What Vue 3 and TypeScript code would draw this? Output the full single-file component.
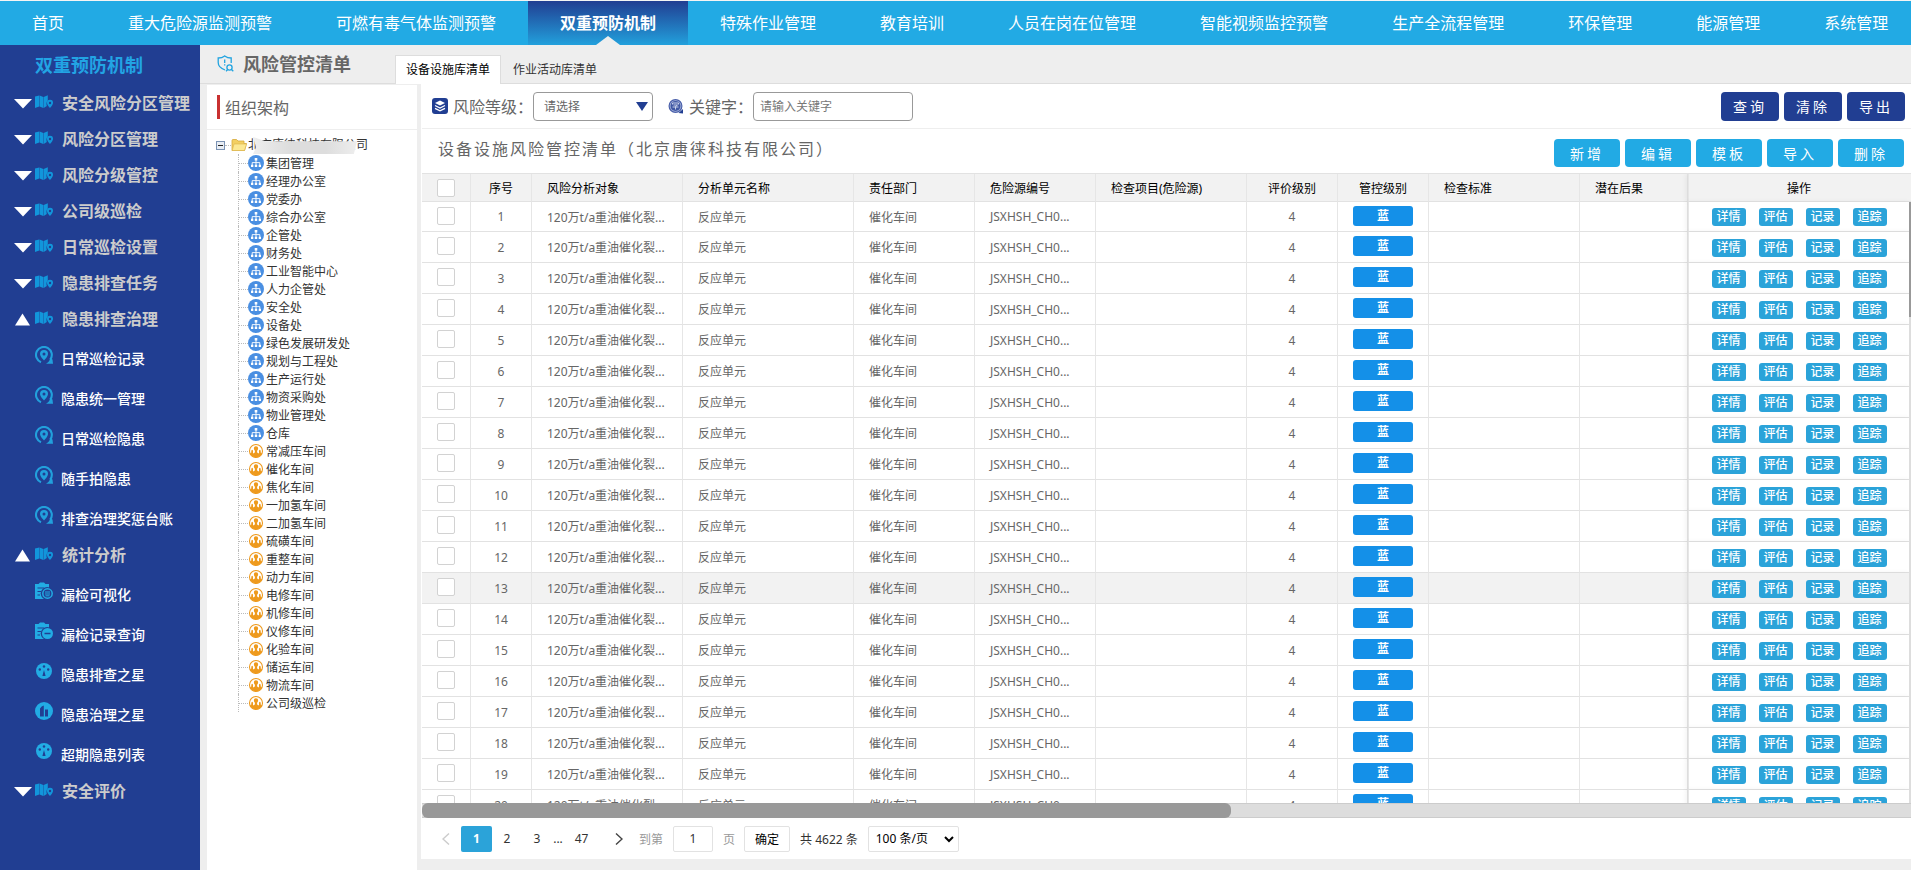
<script setup lang="ts">
import { ref } from 'vue'

interface SubItem { label: string; icon: 'pin' | 'doc' | 'docMinus' | 'wheel' | 'chart' }
interface MenuItem { label: string; children?: SubItem[] }

const navItems: string[] = [
  '首页', '重大危险源监测预警', '可燃有毒气体监测预警', '双重预防机制', '特殊作业管理', '教育培训',
  '人员在岗在位管理', '智能视频监控预警', '生产全流程管理', '环保管理', '能源管理', '系统管理',
]
const activeNav = ref('双重预防机制')

const menu: MenuItem[] = [
  { label: '安全风险分区管理' },
  { label: '风险分区管理' },
  { label: '风险分级管控' },
  { label: '公司级巡检' },
  { label: '日常巡检设置' },
  { label: '隐患排查任务' },
  {
    label: '隐患排查治理',
    children: [
      { label: '日常巡检记录', icon: 'pin' },
      { label: '隐患统一管理', icon: 'pin' },
      { label: '日常巡检隐患', icon: 'pin' },
      { label: '随手拍隐患', icon: 'pin' },
      { label: '排查治理奖惩台账', icon: 'pin' },
    ],
  },
  {
    label: '统计分析',
    children: [
      { label: '漏检可视化', icon: 'doc' },
      { label: '漏检记录查询', icon: 'docMinus' },
      { label: '隐患排查之星', icon: 'wheel' },
      { label: '隐患治理之星', icon: 'chart' },
      { label: '超期隐患列表', icon: 'wheel' },
    ],
  },
  { label: '安全评价' },
]

const departments: string[] = [
  '集团管理', '经理办公室', '党委办', '综合办公室', '企管处', '财务处', '工业智能中心', '人力企管处',
  '安全处', '设备处', '绿色发展研发处', '规划与工程处', '生产运行处', '物资采购处', '物业管理处', '仓库',
]
const workshops: string[] = [
  '常减压车间', '催化车间', '焦化车间', '一加氢车间', '二加氢车间', '硫磺车间', '重整车间', '动力车间',
  '电修车间', '机修车间', '仪修车间', '化验车间', '储运车间', '物流车间', '公司级巡检',
]

const toolbar: string[] = ['新增', '编辑', '模板', '导入', '删除']
const searchButtons: string[] = ['查询', '清除', '导出']
const rowActions: string[] = ['详情', '评估', '记录', '追踪']
const rows: number[] = Array.from({ length: 20 }, (_, i) => i + 1)
const hovered = 13
const keyword = ref('')
const pageInput = ref('1')
</script>

<template>
  <div class="app">
    <nav class="topnav">
      <a v-for="n in navItems" :key="n" href="#" class="nav-item" :class="{ active: n === activeNav }">
        {{ n }}
        <svg v-if="n === activeNav" class="nav-arrow" width="24" height="9" viewBox="0 0 24 9"><path d="M0 9L12 0L24 9Z" fill="#eee" /></svg>
      </a>
    </nav>

    <div class="body">
      <aside class="sidebar">
        <h2 class="side-title">双重预防机制</h2>
        <template v-for="m in menu" :key="m.label">
          <a href="#" class="menu-item">
            <svg class="caret" width="18" height="14" viewBox="0 0 18 14">
              <path v-if="m.children" d="M1 13.5L8.5 1.5L16 13.5Z" fill="#fff" />
              <path v-else d="M0 3L18 3L9 12.500Z" fill="#fff" />
            </svg>
            <svg class="menu-icon" width="18" height="14" viewBox="0 0 18 14">
              <path d="M0 1.500L4.200 .5V11.500L0 13ZM4.600 .5L8.300 2V13L4.600 11.500ZM8.700 2L12.800 .3V5.500Q10.800 7.500 11.800 11L8.700 13Z" fill="#1296db" />
              <path d="M15 4.800a3 3 0 0 1 3 3.200c0 1.900-3 5-3 5s-3-3.100-3-5a3 3 0 0 1 3-3.200Z" fill="#1296db" />
              <circle cx="15" cy="8" r="1.200" fill="#213e92" />
            </svg>
            <span>{{ m.label }}</span>
          </a>
          <a v-for="s in m.children" :key="s.label" href="#" class="sub-item">
            <svg class="sub-icon" width="18" height="18" viewBox="0 0 18 18">
              <g v-if="s.icon === 'pin'">
                <path d="M6 16.200A7.900 7.900 0 1 1 15.300 13.500" fill="none" stroke="#22a0dc" stroke-width="2.100" />
                <path d="M18 17.800H11Q15 15.500 15 12L17.500 13.500Z" fill="#22a0dc" />
                <path d="M9 4a4 4 0 0 1 4 4c0 2.500-4 6.500-4 6.500s-4-4-4-6.500a4 4 0 0 1 4-4Z" fill="#22a0dc" />
                <circle cx="9" cy="8" r="1.500" fill="#213e92" />
              </g>
              <g v-else-if="s.icon === 'doc' || s.icon === 'docMinus'">
                <path d="M0 2H3.500L5 .5H9L10.500 2H14V17H0Z" fill="#22ace4" />
                <path d="M2.500 6H9M2.500 9.500H6M2.500 13H5" stroke="#213e92" stroke-width="1" />
                <circle cx="12.200" cy="11.500" r="6.500" fill="#213e92" />
                <template v-if="s.icon === 'doc'">
                  <circle cx="12.500" cy="11.500" r="4.700" fill="none" stroke="#22ace4" stroke-width="1.500" />
                  <path d="M10 10H15M10 12H15M10.500 13.800H14.500" stroke="#22ace4" stroke-width="1" />
                </template>
                <template v-else>
                  <circle cx="12.500" cy="11.500" r="5.500" fill="#22ace4" />
                  <path d="M9.500 11.500H15.500" stroke="#213e92" stroke-width="1.500" />
                </template>
              </g>
              <g v-else-if="s.icon === 'wheel'">
                <circle cx="9" cy="9" r="8" fill="#22ace4" />
                <circle cx="9" cy="4.500" r="1.200" fill="#213e92" />
                <circle cx="4.800" cy="7.500" r="1.200" fill="#213e92" />
                <circle cx="13.200" cy="7.500" r="1.200" fill="#213e92" />
                <path d="M9 8L10.600 14H7.400Z" fill="#213e92" />
              </g>
              <g v-else>
                <circle cx="9" cy="9" r="9" fill="#22ace4" />
                <path d="M5 6.500Q6.500 4 8.800 3.500V14.500H5ZM10 7.500H13V14.500H10Z" fill="#213e92" />
              </g>
            </svg>
            <span>{{ s.label }}</span>
          </a>
        </template>
      </aside>

      <div class="content">
        <header class="page-head">
          <svg class="shield" width="17" height="17" viewBox="0 0 17 17" fill="none" stroke="#22a4e0" stroke-width="1.300">
            <path d="M8 15Q1.200 12.500 1.200 7.500V3Q5 3 7.700 .9Q10.500 3 14.200 3V8M7.700 4.500V8M7.700 9.200V10.500" />
            <circle cx="12.500" cy="12.500" r="2.600" /><path d="M14.500 14.500L16.300 16.300M10.700 14.500L9 16.300" />
          </svg>
          <h1>风险管控清单</h1>
          <a href="#" class="tab active">设备设施库清单</a>
          <a href="#" class="tab">作业活动库清单</a>
        </header>

        <div class="panels">
          <section class="tree-panel">
            <h3><i class="bar"></i>组织架构</h3>
            <ul class="tree">
              <li class="root">
                <svg class="toggle" width="9" height="9" viewBox="0 0 9 9"><rect x=".5" y=".5" width="8" height="8" fill="#e8edf4" stroke="#7b93b3" /><path d="M2 4.500H7" stroke="#222" /></svg>
                <i class="dash"></i>
                <svg class="folder" width="16" height="16" viewBox="0 0 16 16">
                  <path d="M1 13V3.500Q1 2.500 2 2.500H5.500L7 4H13V6.500H15.500L13.500 13.500H1Z" fill="#f3cf62" stroke="#d6a93a" stroke-width=".8" />
                  <path d="M3 7H15.500L13.500 13.500H1.200Z" fill="#fce893" stroke="#dcb14a" stroke-width=".6" />
                </svg>
                <span class="root-name">北京唐徕科技有限公司<i class="mask"></i></span>
              </li>
              <li v-for="d in departments" :key="d" class="leaf">
                <i class="dash"></i>
                <svg width="16" height="16" viewBox="0 0 16 16">
                  <circle cx="8" cy="8" r="8" fill="#4a8fe2" />
                  <path d="M6.700 3H9.300V5.500H6.700ZM3 9.700H5.300V12H3ZM6.800 9.700H9.200V12H6.800ZM10.700 9.700H13V12H10.700Z" fill="#fff" />
                  <path d="M8 5V10M4.200 10V7.600H11.800V10" fill="none" stroke="#fff" stroke-width=".9" />
                </svg>
                <span>{{ d }}</span>
              </li>
              <li v-for="w in workshops" :key="w" class="leaf">
                <i class="dash"></i>
                <svg width="16" height="16" viewBox="0 0 16 16">
                  <circle cx="8" cy="8" r="6.500" fill="#fff" stroke="#ee9a1d" stroke-width="1.100" />
                  <path d="M8 3.200a2.100 2.100 0 0 1 2.100 2.300Q10.100 7 9.100 7.800V9.500Q11 10 11.300 11V13.500Q8 15.500 4.700 13.500V11Q5 10 6.900 9.500V7.800Q5.900 7 5.900 5.500A2.100 2.100 0 0 1 8 3.200Z" fill="#ee9a1d" />
                  <path d="M2 10.500L3.300 9.500Q3 7 4.200 6.700Q5.300 7 5 9.200V13.500Q3 12.500 2 10.500ZM14 10.500L12.700 9.500Q13 7 11.800 6.700Q10.700 7 11 9.200V13.500Q13 12.500 14 10.500Z" fill="#ee9a1d" />
                </svg>
                <span>{{ w }}</span>
              </li>
            </ul>
          </section>

          <main class="main-panel">
            <form class="search" @submit.prevent>
              <svg width="16" height="16" viewBox="0 0 16 16">
                <rect width="16" height="16" rx="3" fill="#213e92" />
                <path d="M8 2.500L13 5L8 7.500L3 5Z" fill="#fff" />
                <path d="M3 7.500L8 10L13 7.500M3 10.300L8 12.800L13 10.300" fill="none" stroke="#fff" stroke-width="1.300" />
              </svg>
              <label for="level">风险等级：</label>
              <span class="select-wrap">
                <select id="level"><option>请选择</option></select>
                <svg class="select-arrow" width="12" height="9" viewBox="0 0 12 9"><path d="M0 0H12L6 9Z" fill="#213e92" /></svg>
              </span>
              <svg class="key-icon" width="16" height="16" viewBox="0 0 16 16">
                <circle cx="7.500" cy="8" r="6.400" fill="#aab6dc" stroke="#4a60aa" stroke-width="1.200" />
                <circle cx="7.500" cy="8" r="5" fill="#4058a4" />
                <path d="M4.500 6.500V5H10.500V6.500M5.500 7H9.500L7.500 8.500V11.500M4.500 9H10.500" fill="none" stroke="#d5dcf0" stroke-width=".9" />
                <path d="M10.500 15L15 11V15.500Z" fill="#213e92" />
              </svg>
              <label for="kw">关键字：</label>
              <input id="kw" v-model="keyword" type="text" placeholder="请输入关键字" />
              <span class="spacer"></span>
              <button v-for="b in searchButtons" :key="b" type="button" class="btn dark">{{ b }}</button>
            </form>

            <div class="list-head">
              <h2>设备设施风险管控清单（北京唐徕科技有限公司）</h2>
              <span class="spacer"></span>
              <button v-for="b in toolbar" :key="b" type="button" class="btn light">{{ b }}</button>
            </div>

            <div class="grid">
              <table>
                <colgroup>
                  <col class="w49" /><col class="w61" /><col class="w151" /><col class="w171" /><col class="w121" /><col class="w121" />
                  <col class="w151" /><col class="w91" /><col class="w91" /><col class="w151" /><col /><col class="w223" />
                </colgroup>
                <thead>
                  <tr>
                    <th class="c"><input type="checkbox" aria-label="全选" /></th>
                    <th class="c">序号</th><th>风险分析对象</th><th>分析单元名称</th><th>责任部门</th><th>危险源编号</th>
                    <th>检查项目(危险源)</th><th class="c">评价级别</th><th class="c">管控级别</th><th>检查标准</th><th>潜在后果</th>
                    <th class="c fixed">操作</th>
                  </tr>
                </thead>
                <tbody>
                  <tr v-for="r in rows" :key="r" :class="{ hover: r === hovered }">
                    <td class="c raised"><input type="checkbox" :aria-label="`选择第${r}行`" /></td>
                    <td class="c">{{ r }}</td>
                    <td>120万t/a重油催化裂...</td>
                    <td>反应单元</td>
                    <td>催化车间</td>
                    <td>JSXHSH_CH0...</td>
                    <td></td>
                    <td class="c">4</td>
                    <td class="c raised"><span class="level">蓝</span></td>
                    <td></td>
                    <td></td>
                    <td class="fixed">
                      <div class="actions"><button v-for="a in rowActions" :key="a" type="button">{{ a }}</button></div>
                    </td>
                  </tr>
                </tbody>
              </table>
              <div class="vtrack"><div class="vthumb"></div></div>
            </div>
            <div class="htrack"><div class="hthumb"></div></div>

            <div class="pager">
              <button type="button" class="pg" aria-label="上一页"><svg width="8" height="12" viewBox="0 0 8 12"><path d="M7 .5L1 6L7 11.500" fill="none" stroke="#ccc" stroke-width="1.400" /></svg></button>
              <button type="button" class="pg current">1</button>
              <button type="button" class="pg">2</button>
              <button type="button" class="pg">3</button>
              <span class="dots">...</span>
              <button type="button" class="pg last">47</button>
              <button type="button" class="pg next" aria-label="下一页"><svg width="8" height="12" viewBox="0 0 8 12"><path d="M1 .5L7 6L1 11.500" fill="none" stroke="#444" stroke-width="1.400" /></svg></button>
              <label for="pageno">到第</label>
              <input id="pageno" v-model="pageInput" type="text" />
              <span class="gray">页</span>
              <button type="button" class="ok">确定</button>
              <span class="total">共 4622 条</span>
              <span class="size-wrap">
                <select aria-label="每页条数"><option>100 条/页</option></select>
                <svg class="size-arrow" width="10" height="7" viewBox="0 0 10 7"><path d="M1 1L5 5L9 1" fill="none" stroke="#000" stroke-width="2" /></svg>
              </span>
            </div>
          </main>
        </div>
      </div>
    </div>
  </div>
</template>

<style>
body { background: #eee; overflow: hidden; }
</style>

<style scoped>
.app, .app * { box-sizing: border-box; }
.app { display: flex; flex-direction: column; height: 100vh; overflow: hidden; font-family: "Noto Sans", "Noto Sans CJK SC", sans-serif; font-size: 12px; color: #333; }
button, input, select { font-family: inherit; font-size: 12px; margin: 0; padding: 0; }
a { text-decoration: none; color: inherit; }
h1, h2, h3, ul { margin: 0; padding: 0; list-style: none; }
svg { display: block; flex: none; }
i { display: block; flex: none; }
.spacer { flex: 1; }

.topnav { display: flex; flex: none; height: 45px; border-top: 1px solid #f4f4f4; background: #22aae4; overflow: hidden; }
.nav-item { position: relative; flex: none; padding: 0 32px; line-height: 44px; font-size: 16px; color: #fff; white-space: nowrap; }
.nav-item.active { font-weight: bold; background: linear-gradient(#213e92, #22a0dc); }
.nav-arrow { position: absolute; left: 50%; bottom: 0; margin-left: -12px; }

.body { display: flex; flex: 1; min-height: 0; }
.sidebar { flex: none; width: 200px; background: #213e92; overflow: hidden; }
.side-title { padding-left: 35px; height: 40px; line-height: 40px; font-size: 18px; color: #22a4e4; }
.menu-item { display: flex; align-items: center; height: 36px; padding-left: 14px; font-size: 16px; font-weight: bold; color: #ccc; white-space: nowrap; }
.menu-item span { padding-bottom: 2px; }
.caret { margin-right: 3px; }
.menu-icon { margin-right: 9px; margin-bottom: 2px; }
.sub-item { display: flex; align-items: center; height: 40px; padding-left: 35px; font-size: 14px; font-weight: 500; color: #fff; white-space: nowrap; }
.sub-icon { margin-right: 8px; margin-bottom: 4px; }
.sub-item span { padding-top: 2px; }

.content { display: flex; flex-direction: column; flex: 1; min-width: 0; }
.page-head { display: flex; align-items: flex-end; flex: none; height: 39px; padding-left: 17px; border-bottom: 1px solid #ddd; }
.shield { margin-bottom: 11px; }
.page-head h1 { margin: 0 44px 0 9px; line-height: 38px; font-size: 18px; color: #666; }
.tab { height: 28px; padding: 0 11px; line-height: 28px; border: 1px solid transparent; border-bottom: 0; white-space: nowrap; }
.tab.active { height: 29px; margin-bottom: -1px; background: #fff; border-color: #ddd; color: #000; padding: 0 10px; }
.panels { display: flex; flex: 1; min-height: 0; gap: 4px; padding-left: 7px; }

.tree-panel { flex: none; width: 210px; background: #fff; overflow: hidden; border-top: 1px solid #eee; }
.tree-panel h3 { display: flex; align-items: center; height: 45px; padding-left: 10px; border-bottom: 1px solid #eee; font-size: 16px; font-weight: normal; color: #666; }
.bar { width: 3px; height: 24px; margin-right: 5px; background: #c93131; }
.tree { padding: 6px 0 0 9px; white-space: nowrap; }
.tree li { display: flex; align-items: center; height: 18px; }
.dash { width: 8px; height: 0; border-top: 1px dotted #bbb; }
.root .dash { width: 6px; }
.folder { margin-right: 1px; }
.root-name { position: relative; line-height: 18px; }
.mask { position: absolute; left: 5px; top: 1px; width: 104px; height: 17px; background: linear-gradient(90deg, #eee, #ddd 35%, #ddd 70%, #eee); clip-path: polygon(0 0, 12% 25%, 100% 25%, 97% 100%, 0 100%, 3% 60%); }
.leaf { position: relative; margin-left: 22px; border-left: 1px dotted #bbb; color: #333; }
.leaf .dash { width: 9px; }
.leaf span { margin-left: 2px; }

.main-panel { display: flex; flex-direction: column; flex: 1; min-width: 0; margin-bottom: 11px; padding-left: 1px; background: #fff; }
.search { display: flex; align-items: center; flex: none; height: 45px; padding: 0 6px 0 10px; border-bottom: 1px solid #eee; }
.search label { margin-left: 5px; font-size: 16px; color: #666; white-space: nowrap; }
.select-wrap, .size-wrap { position: relative; flex: none; }
.select-wrap select { display: block; width: 120px; height: 29px; padding-left: 10px; border: 1px solid #999; border-radius: 4px; background: #fff; color: #666; appearance: none; }
.select-arrow { position: absolute; right: 5px; top: 10px; }
.key-icon { margin-left: 15px; }
#kw { width: 160px; height: 29px; padding: 0 6px; border: 1px solid #999; border-radius: 4px; background: #fff; color: #333; }
#kw::placeholder { color: #777; opacity: 1; }
.btn { flex: none; border: 0; border-radius: 4px; font-size: 14px; letter-spacing: 3px; color: #fff; }
.dark { width: 58px; height: 29px; margin-left: 5px; background: #213e92; }
.light { width: 66px; height: 28px; margin-left: 5px; background: #22aae4; }
.list-head { display: flex; align-items: center; flex: none; height: 44px; padding: 4px 7px 0 16px; }
.list-head h2 { margin-bottom: 10px; font-size: 16px; font-weight: normal; letter-spacing: 2px; color: #666; white-space: nowrap; }

.grid { position: relative; flex: 1; min-height: 0; overflow: hidden; border-top: 1px solid #e2e2e2; }
table { width: 100%; table-layout: fixed; border-collapse: separate; border-spacing: 0; }
.w49 { width: 49px; } .w61 { width: 61px; } .w91 { width: 91px; } .w121 { width: 121px; }
.w151 { width: 151px; } .w171 { width: 171px; } .w223 { width: 223px; }
th, td { padding: 0 0 0 15px; border-right: 1px solid #e6e6e6; border-bottom: 1px solid #e2e2e2; text-align: left; white-space: nowrap; overflow: hidden; }
th { height: 28px; background: #f2f2f2; font-weight: normal; color: #000; }
td { height: 31px; color: #666; background: #fff; }
tbody tr:first-child td { height: 30px; }
.hover td { background: #f2f2f2; }
.c { padding: 0; text-align: center; }
td.raised { padding-bottom: 2px; }
.fixed { padding: 0 2px 0 0; border-right: 0; overflow: visible; position: relative; box-shadow: -2px 0 5px rgba(0, 0, 0, .06); border-left: 1px solid #e6e6e6; }
td.fixed { padding-top: 1px; }
th input, td input { display: block; width: 18px; height: 18px; margin: 0 auto; border: 1px solid #d2d2d2; border-radius: 2px; background: #fff; appearance: none; }
.level { display: block; width: 60px; height: 20px; margin: 0 auto; border-radius: 3px; background: #1490e8; line-height: 20px; font-weight: bold; color: #fff; }
.actions { display: flex; justify-content: center; gap: 13px; }
.actions button { width: 34px; height: 18px; border: 0; border-radius: 3px; background: #2ba3d9; line-height: 18px; font-weight: 500; color: #fff; }
.vtrack { position: absolute; right: 0; top: 28px; bottom: 0; width: 2px; background: #ddd; }
.vthumb { height: 115px; background: #999; }
.htrack { flex: none; height: 15px; background: #ddd; border: 1px solid #ccc; border-width: 1px 0; }
.hthumb { width: 54.3%; height: 15px; margin-top: -1px; border-radius: 6px; background: #999; }

.pager { display: flex; align-items: center; flex: none; height: 41px; padding: 0 0 0 9px; }
.pg { display: flex; align-items: center; justify-content: center; width: 30px; height: 26px; border: 0; background: none; color: #333; }
.pg.current { width: 31px; border-radius: 2px; background: #2ba3d9; color: #fff; font-weight: bold; }
.dots { width: 12px; text-align: center; }
.pg.last { width: 35px; }
.pg.next { width: 40px; }
.pager label, .gray { color: #999; }
#pageno { width: 40px; height: 26px; margin: 0 10px; border: 1px solid #e2e2e2; border-radius: 2px; text-align: center; color: #333; }
.ok { width: 46px; height: 26px; margin: 0 10px 0 9px; border: 1px solid #e2e2e2; border-radius: 2px; background: #fff; color: #000; }
.total { margin-right: 10px; }
.size-wrap select { display: block; width: 91px; height: 26px; padding-left: 7px; border: 1px solid #e2e2e2; border-radius: 2px; background: #fff; color: #000; appearance: none; }
.size-arrow { position: absolute; right: 5px; top: 10px; }
</style>
